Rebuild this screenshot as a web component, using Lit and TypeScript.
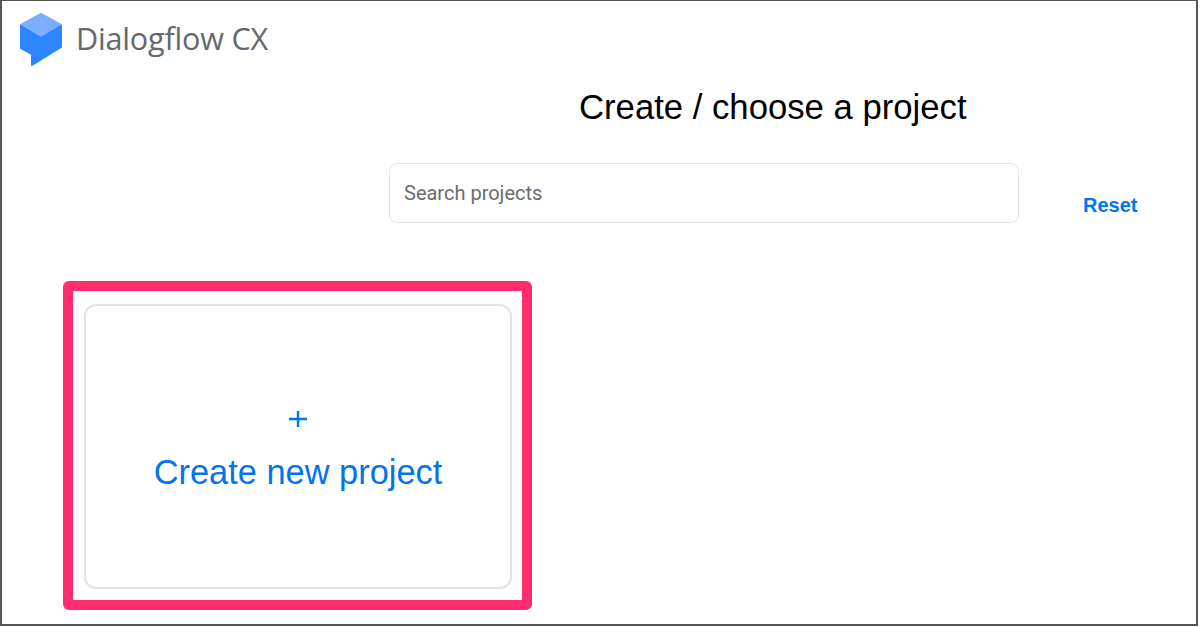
import { LitElement, html, css } from 'lit';
import { customElement } from 'lit/decorators.js';

@customElement('app-root')
export class AppRoot extends LitElement {
  static styles = css`
    :host {
      display: block;
      width: 1200px;
      height: 627px;
      overflow: hidden;
      font-family: 'Liberation Sans', Arial, sans-serif;
      background: #fff;
    }

    .frame {
      box-sizing: border-box;
      width: 1198px;
      height: 626px;
      border: 2px solid #555;
      border-top-width: 1px;
      padding: 12px 0 0 18px;
    }

    .brand {
      display: flex;
      align-items: center;
      gap: 14px;
      height: 53px;
    }

    .brand svg {
      display: block;
      flex: none;
    }

    .brand span {
      font-family: 'Open Sans', sans-serif;
      font-size: 30.6px;
      color: #65686c;
      margin-top: -3px;
      letter-spacing: -0.2px;
    }

    h1 {
      margin: 21px 0 0;
      padding-left: 559px;
      font-size: 34.7px;
      font-weight: 400;
      line-height: 40px;
      color: #000;
    }

    .search-row {
      display: flex;
      align-items: flex-start;
      margin-top: 36px;
      padding-left: 369px;
    }

    .search {
      box-sizing: border-box;
      width: 630px;
      height: 60px;
      border: 1.5px solid #e6e6e6;
      border-radius: 8px;
      padding: 0 14px;
      display: flex;
      align-items: center;
      font-family: Roboto, sans-serif;
      font-size: 20px;
      color: #6a6c70;
    }

    .reset {
      margin: 30px 0 0 64px;
      font-size: 20px;
      font-weight: 700;
      line-height: 24px;
      color: #0274ec;
    }

    .highlight {
      box-sizing: border-box;
      width: 469px;
      height: 329px;
      margin: 58px 0 0 43px;
      border: 10px solid #ff2d6e;
      border-radius: 6px;
      padding: 13px 10px 11px 11px;
    }

    .card {
      box-sizing: border-box;
      height: 100%;
      border: 2px solid #e2e2e2;
      border-radius: 12px;
      display: flex;
      flex-direction: column;
      align-items: center;
      color: #0274ec;
      padding-top: 105px;
    }

    .plus {
      display: block;
    }

    .label {
      margin-top: 25px;
      font-size: 34.4px;
      line-height: 40px;
    }
  `;

  render() {
    return html`
      <div class="frame">
        <div class="brand">
          <svg width="42" height="53" viewBox="0 0 42 53">
            <path d="M21 1 41 12 21 24 1 12Z" fill="#7baeff" stroke="#7baeff" stroke-width="2" stroke-linejoin="round" />
            <path d="M1 13 21 25 41 13V34L12 52V41L1 35Z" fill="#2b86ff" stroke="#2b86ff" stroke-width="2" stroke-linejoin="round" />
          </svg>
          <span>Dialogflow CX</span>
        </div>
        <h1>Create / choose a project</h1>
        <div class="search-row">
          <div class="search">Search projects</div>
          <div class="reset">Reset</div>
        </div>
        <div class="highlight">
          <div class="card">
            <svg class="plus" width="18" height="16" viewBox="0 0 18 16">
              <path d="M9 0V16M0 8H18" stroke="#0274ec" stroke-width="2.4" fill="none" />
            </svg>
            <div class="label">Create new project</div>
          </div>
        </div>
      </div>
    `;
  }
}
